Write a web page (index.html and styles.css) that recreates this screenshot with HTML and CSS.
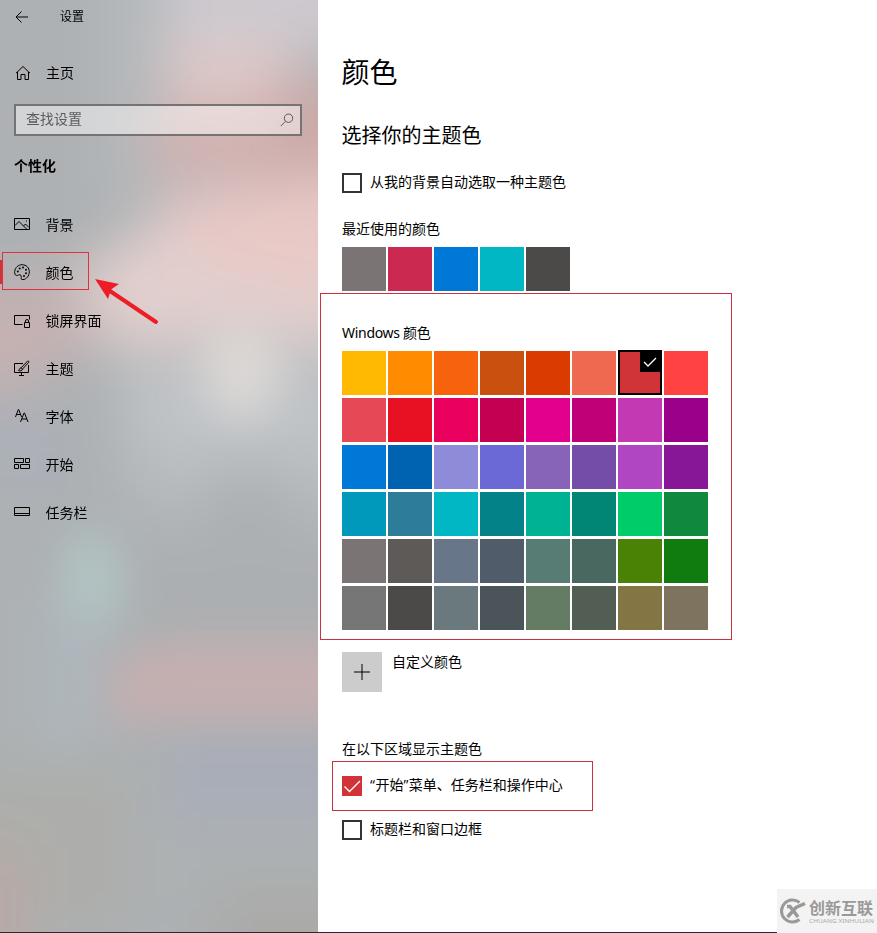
FILE: index.html
```
<!DOCTYPE html>
<html lang="zh-CN">
<head>
  <meta charset="UTF-8">
  <meta name="viewport" content="width=device-width, initial-scale=1.0">
  <title>设置</title>
  <link rel="stylesheet" href="styles.css">
</head>
<body>

  <div class="window">
    <aside class="sidebar">
      <!-- acrylic backdrop -->
      <svg class="backdrop" width="318" height="933" viewBox="0 0 318 933">
        <defs>
          <filter id="soft" color-interpolation-filters="sRGB" filterUnits="userSpaceOnUse" x="-200" y="-200" width="720" height="1340"><feGaussianBlur stdDeviation="27"/></filter>
          <filter id="mid" color-interpolation-filters="sRGB" filterUnits="userSpaceOnUse" x="-200" y="-200" width="720" height="1340"><feGaussianBlur stdDeviation="20"/></filter>
        </defs>
        <g filter="url(#soft)">
          <path fill="#adb1b3" d="M-200-200h720v1340h-720z"/>
          <path fill="#b4b8bb" d="M100-100h70v300h-70z"/>
          <path fill="#cdc9cf" d="M165-100h250v150H165z"/>
          <path fill="#e0c8c7" d="M165 45h130v60H165z"/>
          <path fill="#cba9a7" d="M270 85h150v90H270z"/>
          <path fill="#d5b2b0" d="M150 112h125v60H150z"/>
          <path fill="#e9c9c6" d="M165 195 420 165v155H150z"/>
          <path fill="#e1cfce" d="M70 275 160 215l50 50 210 40v45H110z"/>
          <path fill="#c6b1b2" d="M-100 285H65l35 50-90 60h-110z"/>
          <path fill="#c0c4c8" d="M120 365h300v95H130z"/>
          <path fill="#acb0b8" d="M-100 410H70v80h-170z"/>
          <path fill="#b8bcbf" d="M130 450h290v60H130z"/>
          <path fill="#acaeb1" d="M215 475h65v60h-65zM140 570h280v60H140z"/>
          <path fill="#aeb8bf" d="M45 600h55v140H45z"/>
          <path fill="#a8adb9" d="M170 735h250v85H170z"/>
          <path fill="#adaeab" d="M-100 770H130v160h-230z"/>
          <path fill="#b9a9a6" d="M-100 845H25v200h-125z"/>
          <path fill="#aaaaa8" d="M210 890h210v160H210z"/>
        </g>
        <g filter="url(#mid)">
          <ellipse fill="#dedbd7" opacity=".85" cx="242" cy="372" rx="42" ry="48"/>
          <ellipse fill="#b2c5c4" opacity=".9" cx="92" cy="578" rx="31" ry="50"/>
          <path fill="#c5afb0" d="M105 672 160 642h260v80H115z"/>
        </g>
      </svg>

      <div class="titlebar">
        <svg class="back" width="14" height="12" viewBox="0 0 14 12"><path d="M6.500 .5 1 6l5.500 5.500M1 6h12"/></svg>
        <span>设置</span>
      </div>

      <div class="home">
        <svg width="16" height="16" viewBox="0 0 16 16"><path d="M1 8.200 8 1.500l7 6.700M2.500 7v7.500h3.500V9.500h4v5h3.500V7"/></svg>
        <span>主页</span>
      </div>

      <div class="search">
        <span>查找设置</span>
        <svg width="14" height="14" viewBox="0 0 14 14"><circle cx="8.500" cy="5.200" r="4.200"/><path d="M5.500 8.300.8 13"/></svg>
      </div>

      <h3 class="group">个性化</h3>

      <nav class="nav">
        <a class="nav-item">
          <svg width="16" height="16" viewBox="0 0 16 16"><path d="M.5 2.500h15v11H.5zM1 9.500l4-4 7.500 7.500M9.500 10l2-2 3.500 3.500"/><path d="M12 5h1"/></svg>
          <span>背景</span>
        </a>
        <a class="nav-item active">
          <svg width="16" height="16" viewBox="0 0 16 16"><path d="M7.500 15.300c-1-1.200.4-2.800-.6-4-1.300-1.500-3 .6-4.600.1C.9 11 .5 9.300.7 7.500 1.100 3.500 4.300.7 8.200.7c4 0 7.100 3.100 7.100 7.100 0 4.200-3 7.600-6.300 7.800-.6 0-1.200 0-1.500-.3z"/><g class="dots"><circle cx="3.800" cy="7.500" r="1"/><circle cx="5.700" cy="4.500" r="1"/><circle cx="9" cy="3.600" r="1"/><circle cx="12" cy="5.800" r="1"/><circle cx="12" cy="9.300" r="1"/><circle cx="10" cy="12" r="1"/></g></svg>
          <span>颜色</span>
        </a>
        <a class="nav-item">
          <svg width="16" height="16" viewBox="0 0 16 16"><path d="M8.500 12.500H.5v-9h15v4M10.500 10.500h5v5h-5zM11.500 10.500V9a1.500 1.500 0 0 1 3 0v1.500"/></svg>
          <span>锁屏界面</span>
        </a>
        <a class="nav-item">
          <svg width="16" height="16" viewBox="0 0 16 16"><path d="M9 3.500H.5v9h14V5M7.500 12.500v2.500M5 15.500h5"/><path d="M4.500 10.500c1-.3.800-2.500 2.500-2.700L13.500 1.200c1-.6 1.800.4 1.200 1.200L8.500 9c0 1.700-2.500 2.500-4 1.500zM7 7.800 8.500 9"/></svg>
          <span>主题</span>
        </a>
        <a class="nav-item">
          <svg width="16" height="16" viewBox="0 0 16 16"><path d="M1.500 9 4.300 1.500h.4L7.500 9M2.500 6.500h4M6.500 14 10 5h.5L14 14M7.800 11h5"/></svg>
          <span>字体</span>
        </a>
        <a class="nav-item">
          <svg width="16" height="16" viewBox="0 0 16 16"><path d="M.5 2.500h9v4h-9zM11.500 2.500h4v4h-4zM.5 8.500h4v4h-4zM6.500 8.500h9v4h-9z"/></svg>
          <span>开始</span>
        </a>
        <a class="nav-item">
          <svg width="16" height="16" viewBox="0 0 16 16"><path d="M.5 3.500h15v8H.5zM.5 9.500h15"/></svg>
          <span>任务栏</span>
        </a>
      </nav>

      <div class="nav-mark"></div>
      <svg class="arrow" width="66" height="48" viewBox="0 0 66 48"><path class="shaft" d="M15 12 61 43"/><path class="head" d="M0 0 24 5 16 10.500 13 20z"/></svg>
    </aside>

    <main class="content">
      <h1>颜色</h1>
      <h2>选择你的主题色</h2>

      <label class="check">
        <i class="box"></i>
        <span>从我的背景自动选取一种主题色</span>
      </label>

      <p class="label">最近使用的颜色</p>
      <div class="swatches" id="recent"></div>

      <section class="marked palette">
        <p class="label latin">Windows 颜色</p>
        <div class="swatches" id="windows"></div>
      </section>

      <div class="custom">
        <div class="plus"><svg width="16" height="16" viewBox="0 0 16 16"><path d="M8 0v16M0 8h16"/></svg></div>
        <span>自定义颜色</span>
      </div>

      <p class="label areas">在以下区域显示主题色</p>
      <section class="marked start-option">
        <label class="check">
          <i class="box checked"><svg width="20" height="20" viewBox="0 0 20 20"><path d="M2.500 10.500 7.500 15.500 18 5"/></svg></i>
          <span><span class="quote">“</span>开始<span class="quote">”</span>菜单、任务栏和操作中心</span>
        </label>
      </section>
      <label class="check last">
        <i class="box"></i>
        <span>标题栏和窗口边框</span>
      </label>
    </main>
  </div>

  <div class="watermark">
    <svg width="28" height="26" viewBox="0 0 28 26"><path class="ring" d="M20.500 4.500A11 11 0 1 0 20.500 21.500"/><path class="cross" d="M8 8.500h3L19 19M8.500 19 17 9.500 26 5.500"/></svg>
    <div>
      <b>创新互联</b>
      <svg class="sub" width="66" height="7" viewBox="0 0 66 7"><text x="0" y="5" textLength="65" lengthAdjust="spacingAndGlyphs">CHUANG XINHULIAN</text></svg>
    </div>
  </div>

  <script>
    const recent = ['#7a7574', '#cb2950', '#0078d7', '#00b7c3', '#4c4a48'];

    const colors = [
      '#ffb900', '#ff8c00', '#f7630c', '#ca5010', '#da3b01', '#ef6950', '#d13438', '#ff4343',
      '#e74856', '#e81123', '#ea005e', '#c30052', '#e3008c', '#bf0077', '#c239b3', '#9a0089',
      '#0078d7', '#0063b1', '#8e8cd8', '#6b69d6', '#8764b8', '#744da9', '#b146c2', '#881798',
      '#0099bc', '#2d7d9a', '#00b7c3', '#038387', '#00b294', '#018574', '#00cc6a', '#10893e',
      '#7a7574', '#5d5a58', '#68768a', '#515c6b', '#567c73', '#486860', '#498205', '#107c10',
      '#767676', '#4c4a48', '#69797e', '#4a5459', '#647c64', '#525e54', '#847545', '#7e735f'
    ];
    const selected = '#d13438';

    function render(id, list) {
      const root = document.getElementById(id);
      list.forEach(color => {
        const el = document.createElement('div');
        el.className = 'swatch';
        el.style.backgroundColor = color;
        if (color === selected) {
          el.classList.add('selected');
          el.innerHTML = '<svg width="22" height="22" viewBox="0 0 22 22"><path d="M4 12 8 16 16 8"/></svg>';
        }
        root.appendChild(el);
      });
    }

    render('recent', recent);
    render('windows', colors);
  </script>

</body>
</html>
```
FILE: styles.css
```
* {
  box-sizing: border-box;
}
body {
  margin: 0;
  font-family: "Noto Sans", "Noto Sans CJK SC", sans-serif;
  font-size: 14px;
  line-height: 20px;
  color: #000;
  background-color: #fff;
}
h1, h2, h3, p {
  margin: 0;
  font-weight: normal;
}
svg {
  display: block;
  flex: none;
  fill: none;
  stroke: #000;
  stroke-width: 1;
}
.window {
  display: flex;
  height: 933px;
  border-bottom: 1px solid #2b2b2f;
}

/* sidebar */
.sidebar {
  position: relative;
  z-index: 0;
  width: 318px;
  flex: none;
  overflow: hidden;
  background-color: #adb1b3;
}
.backdrop {
  position: absolute;
  left: 0;
  top: 0;
  z-index: -1;
  stroke: none;
}
.titlebar {
  display: flex;
  align-items: center;
  height: 33px;
  padding-left: 15px;
  font-size: 12px;
}
.titlebar span {
  margin-left: 31px;
}
.home {
  display: flex;
  align-items: center;
  gap: 15px;
  height: 48px;
  margin-top: 16px;
  padding-left: 15px;
}
.search {
  display: flex;
  align-items: center;
  justify-content: space-between;
  width: 288px;
  height: 32px;
  margin: 7px 0 0 14px;
  padding: 0 6px 2px 10px;
  border: 2px solid #757374;
  background-color: rgba(255, 255, 255, 0.45);
  color: #5c5c5e;
}
.search svg {
  stroke: #5c5657;
  margin-top: 2px;
}
.group {
  margin: 20px 0 0 14px;
  font-size: 14px;
  font-weight: bold;
}
.nav {
  margin-top: 25px;
}
.nav-item {
  display: flex;
  align-items: center;
  gap: 15.5px;
  height: 48px;
  padding-left: 14px;
}
.nav-item svg {
  margin-top: -2px;
}
.nav-item .dots {
  fill: #000;
  stroke: none;
}
.active {
  background: linear-gradient(#d13438, #d13438) 0 11px / 3px 24px no-repeat;
}
.nav-mark {
  position: absolute;
  left: 2px;
  top: 252px;
  width: 87px;
  height: 38px;
  border: 1px solid #e0323c;
}
.arrow {
  position: absolute;
  left: 95px;
  top: 279px;
}
.arrow .shaft {
  stroke: #ee1c25;
  stroke-width: 4;
  stroke-linecap: round;
}
.arrow .head {
  fill: #ee1c25;
  stroke: none;
}

/* content */
.content {
  flex: 1;
  padding: 52px 0 0 24px;
}
h1 {
  font-size: 28px;
  line-height: 40px;
}
h2 {
  margin-top: 29px;
  font-size: 20px;
  line-height: 30px;
}
h1, h2 {
  text-indent: -0.5px;
}
.check {
  display: flex;
  gap: 8px;
  height: 20px;
}
.check > span {
  margin-top: -1px;
}
.content > h2 + .check {
  margin-top: 22px;
}
.box {
  width: 20px;
  height: 20px;
  flex: none;
  border: 2px solid #333;
}
.box.checked {
  border: none;
  background-color: #d13438;
}
.box svg, .selected svg {
  stroke: #fff;
  stroke-width: 1.3;
}
.quote {
  font-family: "Open Sans", sans-serif;
  letter-spacing: 0.5px;
}
.label {
  margin-top: 26px;
}
.latin {
  letter-spacing: -0.3px;
}
.swatches {
  display: grid;
  grid-template-columns: repeat(8, 44px);
  grid-auto-rows: 44px;
  gap: 3px 2px;
  margin-top: 8px;
}
.selected {
  display: flex;
  justify-content: flex-end;
  align-items: flex-start;
  height: 45px;
  margin-top: -1px;
  border: 2px solid #000;
}
.selected svg {
  margin: -2px -2px 0 0;
  background-color: #000;
}
.marked {
  border: 1px solid #c8323f;
}
.palette {
  width: 412px;
  height: 347px;
  margin: 2px 0 0 -22px;
  padding: 3px 0 0 21px;
}
.custom {
  display: flex;
  gap: 10px;
  margin-top: 12px;
}
.plus {
  display: flex;
  align-items: center;
  justify-content: center;
  width: 40px;
  height: 40px;
  background-color: #ccc;
}
.areas {
  margin-top: 47px;
}
.start-option {
  width: 261px;
  height: 50px;
  margin: 2px 0 0 -10px;
  padding: 14px 0 0 9px;
}
.last {
  margin-top: 9px;
}

/* watermark */
.watermark {
  position: absolute;
  right: 0;
  top: 889px;
  display: flex;
  align-items: center;
  gap: 2px;
  width: 100px;
  height: 44px;
  padding-left: 2px;
  background-color: #f3f3f3;
  color: #999;
}
.watermark b {
  display: block;
  font-size: 16px;
  line-height: 20px;
}
.watermark svg {
  stroke: #999;
}
.watermark .ring {
  stroke-width: 3;
}
.watermark .cross {
  stroke-width: 3.5;
}
.watermark .sub {
  fill: #aaa;
  stroke: none;
  font-size: 5px;
}
```
